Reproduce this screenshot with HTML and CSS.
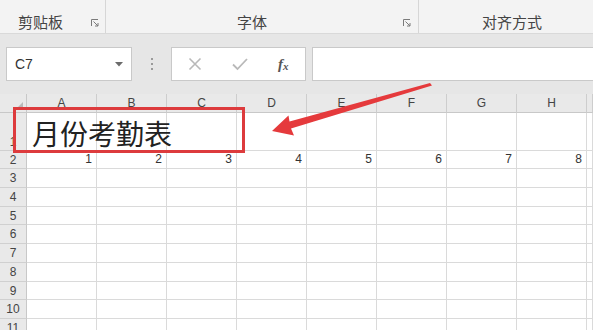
FILE: index.html
```html
<!DOCTYPE html>
<html lang="zh">
<head>
<meta charset="utf-8">
<title>月份考勤表</title>
<link rel="stylesheet" href="styles.css">
</head>
<body>
<div class="page">
  <div class="ribbon">
    <div class="group g1">
      <span class="glabel">剪贴板</span>
      <svg class="launcher" width="8" height="8" viewBox="0 0 8 8"><path d="M0.5 7V0.5H7" fill="none" stroke="#7a7a7a"/><path d="M2.5 2.5L7 7M7 4V7H4" fill="none" stroke="#7a7a7a"/></svg>
    </div>
    <div class="group g2">
      <span class="glabel">字体</span>
      <svg class="launcher" width="8" height="8" viewBox="0 0 8 8"><path d="M0.5 7V0.5H7" fill="none" stroke="#7a7a7a"/><path d="M2.5 2.5L7 7M7 4V7H4" fill="none" stroke="#7a7a7a"/></svg>
    </div>
    <div class="group g3">
      <span class="glabel">对齐方式</span>
    </div>
  </div>

  <div class="fbar">
    <div class="namebox">
      <span class="ref">C7</span>
      <svg class="dd" width="8" height="5" viewBox="0 0 8 5"><path d="M0 0H8L4 4.5Z" fill="#6b6b6b"/></svg>
    </div>
    <div class="grip"><i></i><i></i><i></i></div>
    <div class="fbtns">
      <svg class="ico" width="14" height="14" viewBox="0 0 14 14"><path d="M1.5 1.5L12.5 12.5M12.5 1.5L1.5 12.5" stroke="#b9b9b9" stroke-width="1.6" fill="none"/></svg>
      <svg class="ico" width="16" height="14" viewBox="0 0 16 14"><path d="M1 7.5L5.5 12L15 2" stroke="#b9b9b9" stroke-width="1.8" fill="none"/></svg>
      <span class="fx">f<sub>x</sub></span>
    </div>
    <div class="finput"></div>
  </div>

  <div class="sheet">
    <div class="corner"><span class="tri"></span></div>
    <div class="ch">A</div><div class="ch">B</div><div class="ch">C</div><div class="ch">D</div><div class="ch">E</div><div class="ch">F</div><div class="ch">G</div><div class="ch">H</div><div class="ch"></div>

    <div class="rh rh-bottom">1</div>
    <div class="c title-cell"><span class="title">月份考勤表</span></div><div class="c"></div><div class="c"></div><div class="c"></div><div class="c"></div><div class="c"></div><div class="c"></div><div class="c"></div><div class="c"></div>

    <div class="rh">2</div>
    <div class="c num">1</div><div class="c num">2</div><div class="c num">3</div><div class="c num">4</div><div class="c num">5</div><div class="c num">6</div><div class="c num">7</div><div class="c num">8</div><div class="c"></div>

    <div class="rh">3</div>
    <div class="c"></div><div class="c"></div><div class="c"></div><div class="c"></div><div class="c"></div><div class="c"></div><div class="c"></div><div class="c"></div><div class="c"></div>
    <div class="rh">4</div>
    <div class="c"></div><div class="c"></div><div class="c"></div><div class="c"></div><div class="c"></div><div class="c"></div><div class="c"></div><div class="c"></div><div class="c"></div>
    <div class="rh">5</div>
    <div class="c"></div><div class="c"></div><div class="c"></div><div class="c"></div><div class="c"></div><div class="c"></div><div class="c"></div><div class="c"></div><div class="c"></div>
    <div class="rh">6</div>
    <div class="c"></div><div class="c"></div><div class="c"></div><div class="c"></div><div class="c"></div><div class="c"></div><div class="c"></div><div class="c"></div><div class="c"></div>
    <div class="rh">7</div>
    <div class="c"></div><div class="c"></div><div class="c"></div><div class="c"></div><div class="c"></div><div class="c"></div><div class="c"></div><div class="c"></div><div class="c"></div>
    <div class="rh">8</div>
    <div class="c"></div><div class="c"></div><div class="c"></div><div class="c"></div><div class="c"></div><div class="c"></div><div class="c"></div><div class="c"></div><div class="c"></div>
    <div class="rh">9</div>
    <div class="c"></div><div class="c"></div><div class="c"></div><div class="c"></div><div class="c"></div><div class="c"></div><div class="c"></div><div class="c"></div><div class="c"></div>
    <div class="rh">10</div>
    <div class="c"></div><div class="c"></div><div class="c"></div><div class="c"></div><div class="c"></div><div class="c"></div><div class="c"></div><div class="c"></div><div class="c"></div>
    <div class="rh">11</div>
    <div class="c"></div><div class="c"></div><div class="c"></div><div class="c"></div><div class="c"></div><div class="c"></div><div class="c"></div><div class="c"></div><div class="c"></div>
  </div>

  <div class="highlight"></div>
  <svg class="arrow" width="593" height="330" viewBox="0 0 593 330">
    <polygon points="272,131 288.5,115.5 289.5,121.5 430,83 432,85.5 291,128.5 294,135.5" fill="#e53a3c"/>
  </svg>
</div>
</body>
</html>
```

FILE: styles.css
```css
* { box-sizing: border-box; }
html, body { margin: 0; padding: 0; }
body {
  width: 593px;
  height: 330px;
  overflow: hidden;
  background: #ffffff;
  font-family: "Noto Sans CJK SC", "Liberation Sans", sans-serif;
}
.page {
  position: relative;
  width: 593px;
  height: 330px;
  overflow: hidden;
}

/* ribbon */
.ribbon {
  display: flex;
  height: 34px;
  background: #f3f3f3;
  border-bottom: 1px solid #d9d9d9;
}
.group {
  display: flex;
  align-items: center;
  height: 33px;
  padding-top: 10px;
  border-right: 1px solid #d6d6d6;
}
.glabel {
  font-size: 15px;
  line-height: 16px;
  color: #444;
}
.launcher { display: block; margin-top: 2px; }
.g1 { width: 106px; padding-left: 18px; }
.g1 .launcher { margin-left: auto; margin-right: 6px; }
.g2 { width: 313px; padding-left: 131px; }
.g2 .launcher { margin-left: auto; margin-right: 7px; }
.g3 { flex: 1; padding-left: 63px; border-right: none; }

/* formula bar */
.fbar {
  display: flex;
  align-items: center;
  height: 60px;
  background: #e6e6e6;
  padding: 0 0 0 6px;
}
.namebox {
  display: flex;
  align-items: center;
  width: 126px;
  height: 34px;
  background: #fff;
  border: 1px solid #c9c9c9;
  padding: 0 8px 0 8px;
}
.ref {
  font-family: "Liberation Sans", sans-serif;
  font-size: 14px;
  color: #333;
}
.dd { margin-left: auto; }
.grip {
  width: 39px;
  display: flex;
  flex-direction: column;
  align-items: center;
  gap: 3px;
}
.grip i {
  display: block;
  width: 2px;
  height: 2px;
  background: #9a9a9a;
}
.fbtns {
  display: flex;
  align-items: center;
  width: 135px;
  height: 34px;
  background: #fff;
  border: 1px solid #c9c9c9;
  padding-left: 16px;
}
.fbtns .ico:first-child { margin-right: 30px; }
.fbtns .ico + .ico { margin-right: 30px; }
.fx {
  font-family: "Liberation Serif", serif;
  font-style: italic;
  font-size: 15px;
  color: #555;
  font-weight: bold;
}
.fx sub { font-size: 11px; vertical-align: -1px; }
.finput {
  flex: 1;
  margin-left: 6px;
  height: 34px;
  background: #fff;
  border: 1px solid #c9c9c9;
  border-right: none;
}

/* sheet */
.sheet {
  display: grid;
  grid-template-columns: 27px repeat(8, 70px) 1fr;
  grid-template-rows: 19px 38px 18px 19px 19px 18px 19px 19px 19px 18px 19px 19px;
  font-family: "Liberation Sans", sans-serif;
}
.corner {
  position: relative;
  background: #e9e9e9;
  border-right: 1px solid #c8c8c8;
  border-bottom: 1px solid #c8c8c8;
}
.tri {
  position: absolute;
  right: 3px;
  bottom: 3px;
  width: 0;
  height: 0;
  border-left: 7px solid transparent;
  border-bottom: 7px solid #b9b9b9;
}
.ch {
  background: #e9e9e9;
  border-right: 1px solid #cdcdcd;
  border-bottom: 1px solid #c8c8c8;
  font-size: 12px;
  color: #444;
  text-align: center;
  line-height: 18px;
}
.rh {
  background: #e9e9e9;
  border-right: 1px solid #c8c8c8;
  border-bottom: 1px solid #d0d0d0;
  font-size: 12px;
  color: #444;
  display: flex;
  align-items: center;
  justify-content: center;
}
.rh-bottom { align-items: flex-end; padding-bottom: 1px; }
.c {
  border-right: 1px solid #dadada;
  border-bottom: 1px solid #dadada;
}
.num {
  font-size: 12px;
  color: #333;
  text-align: right;
  padding-right: 4px;
  line-height: 17px;
}
.title-cell {
  position: relative;
  z-index: 1;
  display: flex;
  align-items: center;
  padding-left: 5px;
  padding-top: 2px;
  overflow: visible;
}
.title {
  white-space: nowrap;
  font-family: "Noto Sans CJK SC", sans-serif;
  font-size: 28px;
  line-height: 30px;
  color: #222;
}

/* annotations */
.highlight {
  position: absolute;
  left: 13px;
  top: 107px;
  width: 232px;
  height: 46px;
  border: 3px solid #dd3b3d;
  z-index: 2;
}
.arrow {
  position: absolute;
  left: 0;
  top: 0;
  z-index: 3;
}
```
